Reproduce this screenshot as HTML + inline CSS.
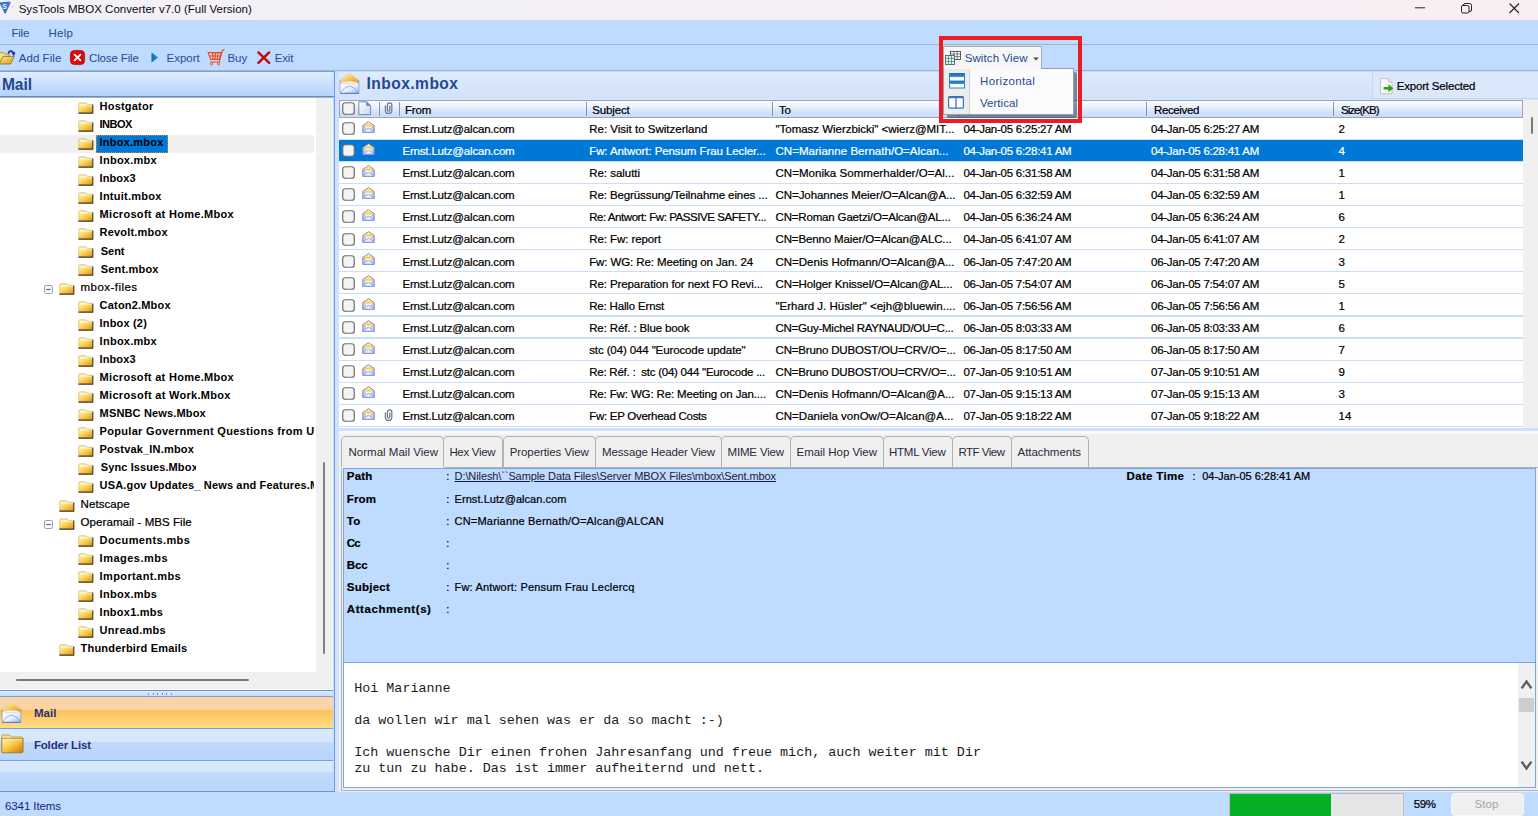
<!DOCTYPE html>
<html><head><meta charset="utf-8"><title>SysTools MBOX Converter</title>
<style>
html,body{margin:0;padding:0;}
body{width:1538px;height:816px;overflow:hidden;position:relative;background:#bfdbff;font-family:"Liberation Sans",sans-serif;}
.b{position:absolute;box-sizing:border-box;}
.t{position:absolute;white-space:pre;}
.k{-webkit-text-stroke:0.22px currentColor;}
svg{position:absolute;overflow:visible;}
</style></head><body>
<div class="b" style="left:0px;top:0px;width:1538px;height:20px;background:linear-gradient(90deg,#f3f1f8 0%,#f5eff6 60%,#f9eef4 100%);"></div>
<svg style="left:0;top:1px" width="14" height="14" viewBox="0 0 14 14"><defs><linearGradient id="gApp" x1="0" y1="0" x2="1" y2="1"><stop offset="0" stop-color="#2a5fb8"/><stop offset=".5" stop-color="#3b7fe0"/><stop offset="1" stop-color="#1c4a9c"/></linearGradient></defs><path d="M-0.5 1.6 L9.8 0.4 L10.6 2 L5.6 12.6 L4.6 12.6 Z" fill="url(#gApp)"/><text x="2.2" y="7.6" font-size="7" font-weight="bold" fill="#e8eef8" font-family="Liberation Sans">S</text><circle cx="12.9" cy="5.6" r=".6" fill="#9aa"/><circle cx="11.2" cy="7.4" r=".4" fill="#aab"/></svg>
<span class="t " style="left:18.70px;top:1px;font-size:11.5px;line-height:16px;color:#0a0a0a;letter-spacing:0.011px;">SysTools MBOX Converter v7.0 (Full Version)</span>
<svg style="left:1410px;top:0" width="128" height="20" viewBox="0 0 128 20"><path d="M5 7.8H15" stroke="#222" stroke-width="1"/><rect x="51.5" y="5.5" width="7.5" height="7.5" rx="1.5" fill="none" stroke="#222" stroke-width="1"/><path d="M53.5 5.5V5Q53.5 3.5 55 3.5H59.5Q61.5 3.5 61.5 5.5V10Q61.5 11.5 60 11.5H59" fill="none" stroke="#222" stroke-width="1"/><path d="M99.5 3.5L109 13M109 3.5L99.5 13" stroke="#222" stroke-width="1.1"/></svg>
<div class="b" style="left:0px;top:20px;width:1538px;height:24px;background:#bfdbff;"></div>
<div class="b" style="left:0px;top:44px;width:1538px;height:1.5px;background:#a3b4cc;"></div>
<span class="t " style="left:11.40px;top:25px;font-size:11.5px;line-height:16px;color:#1f4a98;letter-spacing:-0.208px;">File</span>
<span class="t " style="left:48.50px;top:25px;font-size:11.5px;line-height:16px;color:#1f4a98;letter-spacing:0.262px;">Help</span>
<div class="b" style="left:0px;top:45px;width:1538px;height:25px;background:#bfdbff;"></div>
<div class="b" style="left:0px;top:70.1px;width:1538px;height:1.4px;background:#a3b4cc;"></div>
<div class="b" style="left:339px;top:71.5px;width:1199px;height:0.7px;background:#d5e4fa;"></div>
<div class="b" style="left:0px;top:71.3px;width:335px;height:1.1px;background:#7f9fd2;"></div>
<svg style="left:-2px;top:49px" width="18" height="16" viewBox="0 0 18 16"><defs><linearGradient id="gF1" x1="0" y1="0" x2="1" y2="1"><stop offset="0" stop-color="#fbe88e"/><stop offset="1" stop-color="#dc9c1c"/></linearGradient></defs><path d="M.4 14.6V3.6h5l1.4 1.6H11V7.6" fill="#f6e37c" stroke="#a8882c" stroke-width=".8"/><path d="M1.2 15L5 7.4h11.2L12.6 15Z" fill="url(#gF1)" stroke="#8a6a18" stroke-width=".8"/><path d="M10.4 4.8C10.6 1.6 14.4 .8 15.6 4.2" fill="none" stroke="#1c2c94" stroke-width="1.5"/><path d="M13.2 3.6L17.4 3.2 16 7.2Z" fill="#1c2c94"/></svg>
<span class="t " style="left:18.70px;top:50px;font-size:11.5px;line-height:16px;color:#1f4a98;letter-spacing:0.064px;">Add File</span>
<svg style="left:70px;top:50px" width="15" height="15" viewBox="0 0 15 15"><rect x=".4" y=".4" width="14.2" height="14.2" rx="4" fill="#dd0808" stroke="#b80006" stroke-width=".7"/><path d="M4.8 4.8L10.2 10.2M10.2 4.8L4.8 10.2" stroke="#fff" stroke-width="1.9" stroke-linecap="square"/></svg>
<span class="t " style="left:89.00px;top:50px;font-size:11.5px;line-height:16px;color:#1f4a98;letter-spacing:-0.133px;">Close File</span>
<svg style="left:151px;top:52px" width="8" height="11" viewBox="0 0 8 11"><defs><linearGradient id="gEx" x1="0" y1="0" x2="1" y2="0"><stop offset="0" stop-color="#0a6cb0"/><stop offset="1" stop-color="#2098d8"/></linearGradient></defs><path d="M.5 .5L7.2 5.5 .5 10.5Z" fill="url(#gEx)"/></svg>
<span class="t " style="left:166.50px;top:50px;font-size:11.5px;line-height:16px;color:#1f4a98;letter-spacing:0.011px;">Export</span>
<svg style="left:207px;top:48px" width="19" height="18" viewBox="0 0 19 18"><g fill="none" stroke="#f04a1c" stroke-width="1.15"><path d="M1.2 4.6H14.2L12.6 11.4H3.6Z"/><path d="M17.4 1.4L15.4 2.4 12.2 14H3.2"/><path d="M2.4 8H13.4M5.4 4.8L6 11.2M8.2 4.8V11.2M11 4.8L10.4 11.2"/></g><circle cx="4.6" cy="15.8" r="1.2" fill="none" stroke="#f04a1c" stroke-width=".9"/><circle cx="11.6" cy="15.8" r="1.2" fill="none" stroke="#f04a1c" stroke-width=".9"/></svg>
<span class="t " style="left:227.40px;top:50px;font-size:11.5px;line-height:16px;color:#1f4a98;letter-spacing:-0.005px;">Buy</span>
<svg style="left:257px;top:51px" width="14" height="13" viewBox="0 0 14 13"><path d="M1.4 1.4L12.2 11.8M12.2 1.4L1.4 11.8" stroke="#c20808" stroke-width="2.4" stroke-linecap="round"/></svg>
<span class="t " style="left:274.70px;top:50px;font-size:11.5px;line-height:16px;color:#1f4a98;letter-spacing:-0.118px;">Exit</span>
<div class="b" style="left:0px;top:72px;width:333px;height:25px;background:linear-gradient(180deg,#e6f0fe 0%,#dcebfe 6%,#d2e4fd 35%,#c0dafc 65%,#b3d2fb 100%);"></div>
<div class="b" style="left:0px;top:95.6px;width:335px;height:1.5px;background:#5f8dcc;"></div>
<div class="b" style="left:0px;top:97.1px;width:333px;height:0.7px;background:#a8b4c4;"></div>
<span class="t " style="left:1.90px;top:74px;font-size:15.6px;line-height:21px;font-weight:bold;color:#26478f;letter-spacing:-0.010px;">Mail</span>
<div class="b" style="left:0px;top:97.5px;width:316px;height:574.5px;background:#fff;"></div>
<div class="b" style="left:316px;top:97.5px;width:17px;height:591px;background:#f0f0f0;"></div>
<div class="b" style="left:0px;top:672px;width:333px;height:17px;background:#f0f0f0;"></div>
<div class="b" style="left:332.4px;top:98px;width:0.8px;height:592px;background:#eef4fd;"></div>
<div class="b" style="left:333.7px;top:72px;width:1.2px;height:720px;background:#6f9bd6;"></div>
<div class="b" style="left:335px;top:72px;width:4px;height:720px;background:#d0e2fc;"></div>
<div class="b" style="left:16px;top:679.3px;width:233px;height:2px;background:#7a7a7a;border-radius:1px;"></div>
<div class="b" style="left:322.8px;top:462px;width:2px;height:192px;background:#808080;border-radius:1px;"></div>
<svg width="0" height="0" style="left:0;top:0"><defs>
<linearGradient id="gFo" x1="0" y1="0" x2="1" y2="1"><stop offset="0" stop-color="#fff4b4"/><stop offset=".4" stop-color="#fbd660"/><stop offset="1" stop-color="#dd9410"/></linearGradient>
<g id="fold"><path d="M1 3.4V1.7Q1 .9 1.8 .9H7.4Q8.2 .9 8.6 1.5L9.2 2.4H13.4Q14.3 2.4 14.3 3.3V4.4H1Z" fill="#fff7c4" stroke="#c4a24c" stroke-width=".7"/><path d="M.7 2.9H14.4V10.8H.7Z" fill="url(#gFo)"/><path d="M.7 2.9V10.8" stroke="#dcb652" stroke-width=".6"/><path d="M.9 3.2H14.2" stroke="#fffbe0" stroke-width=".7"/><path d="M.4 11.1H15M14.8 2.6V11.6" stroke="#3e2e0c" stroke-width="1.1"/></g>
<g id="exp"><rect x=".5" y=".5" width="8" height="8" rx="1.4" fill="#fafafa" stroke="#a2a2a2"/><path d="M2.3 4.5H6.7" stroke="#4a66c0" stroke-width="1.2"/></g>
</defs></svg>
<div class="b" style="left:0;top:98px;width:314.4px;height:574px;overflow:hidden;">
<span class="t " style="left:99.60px;top:0px;font-size:11px;line-height:16px;font-weight:bold;color:#000;letter-spacing:0.206px;">Hostgator</span>
<svg style="left:78px;top:3.7999999999999945px" width="16" height="13" viewBox="0 0 16 13"><use href="#fold"/></svg>
<span class="t " style="left:99.60px;top:18px;font-size:11px;line-height:16px;font-weight:bold;color:#000;letter-spacing:-0.547px;">INBOX</span>
<svg style="left:78px;top:21.86499999999999px" width="16" height="13" viewBox="0 0 16 13"><use href="#fold"/></svg>
<div class="b" style="left:0px;top:37.12999999999999px;width:316px;height:18px;background:#f0f0f0;"></div>
<div class="b" style="left:96.2px;top:36.82999999999999px;width:71.7px;height:18.3px;background:#0078d7;border:1px dotted #d8862a;"></div>
<span class="t " style="left:99.60px;top:36px;font-size:11px;line-height:16px;font-weight:bold;color:#000;letter-spacing:0.218px;">Inbox.mbox</span>
<svg style="left:78px;top:39.92999999999999px" width="16" height="13" viewBox="0 0 16 13"><use href="#fold"/></svg>
<span class="t " style="left:99.60px;top:54px;font-size:11px;line-height:16px;font-weight:bold;color:#000;letter-spacing:0.266px;">Inbox.mbx</span>
<svg style="left:78px;top:57.99500000000002px" width="16" height="13" viewBox="0 0 16 13"><use href="#fold"/></svg>
<span class="t " style="left:99.60px;top:72px;font-size:11px;line-height:16px;font-weight:bold;color:#000;letter-spacing:0.092px;">Inbox3</span>
<svg style="left:78px;top:76.06000000000002px" width="16" height="13" viewBox="0 0 16 13"><use href="#fold"/></svg>
<span class="t " style="left:99.60px;top:90px;font-size:11px;line-height:16px;font-weight:bold;color:#000;letter-spacing:0.248px;">Intuit.mbox</span>
<svg style="left:78px;top:94.12500000000001px" width="16" height="13" viewBox="0 0 16 13"><use href="#fold"/></svg>
<span class="t " style="left:99.60px;top:108px;font-size:11px;line-height:16px;font-weight:bold;color:#000;letter-spacing:0.303px;">Microsoft at Home.Mbox</span>
<svg style="left:78px;top:112.19000000000001px" width="16" height="13" viewBox="0 0 16 13"><use href="#fold"/></svg>
<span class="t " style="left:99.60px;top:126px;font-size:11px;line-height:16px;font-weight:bold;color:#000;letter-spacing:0.190px;">Revolt.mbox</span>
<svg style="left:78px;top:130.255px" width="16" height="13" viewBox="0 0 16 13"><use href="#fold"/></svg>
<span class="t " style="left:100.80px;top:145px;font-size:11px;line-height:16px;font-weight:bold;color:#000;letter-spacing:-0.034px;">Sent</span>
<svg style="left:78px;top:148.32px" width="16" height="13" viewBox="0 0 16 13"><use href="#fold"/></svg>
<span class="t " style="left:100.80px;top:163px;font-size:11px;line-height:16px;font-weight:bold;color:#000;letter-spacing:0.174px;">Sent.mbox</span>
<svg style="left:78px;top:166.385px" width="16" height="13" viewBox="0 0 16 13"><use href="#fold"/></svg>
<span class="t  k" style="left:80.60px;top:181px;font-size:11.5px;line-height:16px;color:#000;letter-spacing:0.450px;">mbox-files</span>
<svg style="left:59px;top:184.95px" width="16" height="13" viewBox="0 0 16 13"><use href="#fold"/></svg>
<svg style="left:44px;top:187.25px" width="9" height="9" viewBox="0 0 9 9"><use href="#exp"/></svg>
<span class="t " style="left:99.60px;top:199px;font-size:11px;line-height:16px;font-weight:bold;color:#000;letter-spacing:0.186px;">Caton2.Mbox</span>
<svg style="left:78px;top:202.515px" width="16" height="13" viewBox="0 0 16 13"><use href="#fold"/></svg>
<span class="t " style="left:99.60px;top:217px;font-size:11px;line-height:16px;font-weight:bold;color:#000;letter-spacing:0.174px;">Inbox (2)</span>
<svg style="left:78px;top:220.57999999999998px" width="16" height="13" viewBox="0 0 16 13"><use href="#fold"/></svg>
<span class="t " style="left:99.60px;top:235px;font-size:11px;line-height:16px;font-weight:bold;color:#000;letter-spacing:0.266px;">Inbox.mbx</span>
<svg style="left:78px;top:238.64500000000004px" width="16" height="13" viewBox="0 0 16 13"><use href="#fold"/></svg>
<span class="t " style="left:99.60px;top:253px;font-size:11px;line-height:16px;font-weight:bold;color:#000;letter-spacing:0.092px;">Inbox3</span>
<svg style="left:78px;top:256.71px" width="16" height="13" viewBox="0 0 16 13"><use href="#fold"/></svg>
<span class="t " style="left:99.60px;top:271px;font-size:11px;line-height:16px;font-weight:bold;color:#000;letter-spacing:0.303px;">Microsoft at Home.Mbox</span>
<svg style="left:78px;top:274.77500000000003px" width="16" height="13" viewBox="0 0 16 13"><use href="#fold"/></svg>
<span class="t " style="left:99.60px;top:289px;font-size:11px;line-height:16px;font-weight:bold;color:#000;letter-spacing:0.306px;">Microsoft at Work.Mbox</span>
<svg style="left:78px;top:292.84px" width="16" height="13" viewBox="0 0 16 13"><use href="#fold"/></svg>
<span class="t " style="left:99.60px;top:307px;font-size:11px;line-height:16px;font-weight:bold;color:#000;letter-spacing:0.153px;">MSNBC News.Mbox</span>
<svg style="left:78px;top:310.90500000000003px" width="16" height="13" viewBox="0 0 16 13"><use href="#fold"/></svg>
<span class="t " style="left:99.60px;top:325px;font-size:11px;line-height:16px;font-weight:bold;color:#000;letter-spacing:0.307px;">Popular Government Questions from U</span>
<svg style="left:78px;top:328.96999999999997px" width="16" height="13" viewBox="0 0 16 13"><use href="#fold"/></svg>
<span class="t " style="left:99.60px;top:343px;font-size:11px;line-height:16px;font-weight:bold;color:#000;letter-spacing:0.180px;">Postvak_IN.mbox</span>
<svg style="left:78px;top:347.035px" width="16" height="13" viewBox="0 0 16 13"><use href="#fold"/></svg>
<span class="t " style="left:100.80px;top:361px;font-size:11px;line-height:16px;font-weight:bold;color:#000;letter-spacing:0.097px;">Sync Issues.Mbo</span>
<span class="t " style="left:191.70px;top:361px;font-size:11px;line-height:16px;font-weight:bold;color:#000;width:4.6px;overflow:hidden;">x</span>
<svg style="left:78px;top:365.09999999999997px" width="16" height="13" viewBox="0 0 16 13"><use href="#fold"/></svg>
<span class="t " style="left:99.60px;top:379px;font-size:11px;line-height:16px;font-weight:bold;color:#000;letter-spacing:0.160px;">USA.gov Updates_ News and Features.M</span>
<svg style="left:78px;top:383.165px" width="16" height="13" viewBox="0 0 16 13"><use href="#fold"/></svg>
<span class="t  k" style="left:80.60px;top:398px;font-size:11.5px;line-height:16px;color:#000;letter-spacing:0.065px;">Netscape</span>
<svg style="left:59px;top:401.72999999999996px" width="16" height="13" viewBox="0 0 16 13"><use href="#fold"/></svg>
<span class="t  k" style="left:80.60px;top:416px;font-size:11.5px;line-height:16px;color:#000;letter-spacing:0.064px;">Operamail - MBS File</span>
<svg style="left:59px;top:419.795px" width="16" height="13" viewBox="0 0 16 13"><use href="#fold"/></svg>
<svg style="left:44px;top:422.095px" width="9" height="9" viewBox="0 0 9 9"><use href="#exp"/></svg>
<span class="t " style="left:99.60px;top:434px;font-size:11px;line-height:16px;font-weight:bold;color:#000;letter-spacing:0.387px;">Documents.mbs</span>
<svg style="left:78px;top:437.36000000000007px" width="16" height="13" viewBox="0 0 16 13"><use href="#fold"/></svg>
<span class="t " style="left:99.60px;top:452px;font-size:11px;line-height:16px;font-weight:bold;color:#000;letter-spacing:0.482px;">Images.mbs</span>
<svg style="left:78px;top:455.425px" width="16" height="13" viewBox="0 0 16 13"><use href="#fold"/></svg>
<span class="t " style="left:99.60px;top:470px;font-size:11px;line-height:16px;font-weight:bold;color:#000;letter-spacing:0.385px;">Important.mbs</span>
<svg style="left:78px;top:473.49000000000007px" width="16" height="13" viewBox="0 0 16 13"><use href="#fold"/></svg>
<span class="t " style="left:99.60px;top:488px;font-size:11px;line-height:16px;font-weight:bold;color:#000;letter-spacing:0.299px;">Inbox.mbs</span>
<svg style="left:78px;top:491.555px" width="16" height="13" viewBox="0 0 16 13"><use href="#fold"/></svg>
<span class="t " style="left:99.60px;top:506px;font-size:11px;line-height:16px;font-weight:bold;color:#000;letter-spacing:0.248px;">Inbox1.mbs</span>
<svg style="left:78px;top:509.62000000000006px" width="16" height="13" viewBox="0 0 16 13"><use href="#fold"/></svg>
<span class="t " style="left:99.60px;top:524px;font-size:11px;line-height:16px;font-weight:bold;color:#000;letter-spacing:0.283px;">Unread.mbs</span>
<svg style="left:78px;top:527.6850000000001px" width="16" height="13" viewBox="0 0 16 13"><use href="#fold"/></svg>
<span class="t " style="left:80.60px;top:542px;font-size:11px;line-height:16px;font-weight:bold;color:#000;letter-spacing:0.189px;">Thunderbird Emails</span>
<svg style="left:59px;top:545.7500000000001px" width="16" height="13" viewBox="0 0 16 13"><use href="#fold"/></svg>
</div>
<div class="b" style="left:0px;top:689px;width:333px;height:1px;background:#fff;"></div>
<div class="b" style="left:0px;top:690px;width:333px;height:1px;background:#6593cf;"></div>
<div class="b" style="left:0px;top:691px;width:333px;height:5px;background:linear-gradient(180deg,#dce9fb,#c6dbf9);"></div>
<div class="b" style="left:148.0px;top:692.6px;width:2px;height:2px;background:#5a7fbf;border-radius:1px;"></div>
<div class="b" style="left:149.0px;top:693.4px;width:1.6px;height:1.6px;background:#f4f8ff;border-radius:1px;"></div>
<div class="b" style="left:152.6px;top:692.6px;width:2px;height:2px;background:#5a7fbf;border-radius:1px;"></div>
<div class="b" style="left:153.6px;top:693.4px;width:1.6px;height:1.6px;background:#f4f8ff;border-radius:1px;"></div>
<div class="b" style="left:157.2px;top:692.6px;width:2px;height:2px;background:#5a7fbf;border-radius:1px;"></div>
<div class="b" style="left:158.2px;top:693.4px;width:1.6px;height:1.6px;background:#f4f8ff;border-radius:1px;"></div>
<div class="b" style="left:161.8px;top:692.6px;width:2px;height:2px;background:#5a7fbf;border-radius:1px;"></div>
<div class="b" style="left:162.8px;top:693.4px;width:1.6px;height:1.6px;background:#f4f8ff;border-radius:1px;"></div>
<div class="b" style="left:166.4px;top:692.6px;width:2px;height:2px;background:#5a7fbf;border-radius:1px;"></div>
<div class="b" style="left:167.4px;top:693.4px;width:1.6px;height:1.6px;background:#f4f8ff;border-radius:1px;"></div>
<div class="b" style="left:171.0px;top:692.6px;width:2px;height:2px;background:#5a7fbf;border-radius:1px;"></div>
<div class="b" style="left:172.0px;top:693.4px;width:1.6px;height:1.6px;background:#f4f8ff;border-radius:1px;"></div>
<div class="b" style="left:0px;top:696px;width:333px;height:1.2px;background:#76a0d8;"></div>
<div class="b" style="left:0px;top:697px;width:333px;height:32px;background:linear-gradient(180deg,#fbd6ab 0%,#fbd2a2 40%,#fdc25c 42%,#fdca6c 60%,#fedf85 100%);"></div>
<div class="b" style="left:0px;top:728px;width:333px;height:1.2px;background:#76a0d8;"></div>
<div class="b" style="left:0px;top:729px;width:333px;height:32px;background:linear-gradient(180deg,#dbe9fc 0%,#d6e6fc 40%,#c1dafc 42%,#b9d5fb 100%);"></div>
<div class="b" style="left:0px;top:760px;width:333px;height:1.2px;background:#76a0d8;"></div>
<div class="b" style="left:0px;top:761px;width:333px;height:30px;background:linear-gradient(180deg,#dbe9fc 0%,#d6e6fc 37%,#c1dafc 39%,#b9d5fb 100%);"></div>
<div class="b" style="left:0px;top:791px;width:335px;height:1px;background:#6593cf;"></div>
<span class="t " style="left:33.90px;top:705px;font-size:11.5px;line-height:16px;font-weight:bold;color:#2c307c;letter-spacing:0.084px;">Mail</span>
<span class="t " style="left:33.90px;top:737px;font-size:11.5px;line-height:16px;font-weight:bold;color:#2c307c;letter-spacing:-0.162px;">Folder List</span>
<svg style="left:1.2px;top:701px" width="22" height="24" viewBox="0 0 22 24"><use href="#benv"/></svg>
<svg style="left:1px;top:734px" width="23" height="20" viewBox="0 0 23 20"><defs><linearGradient id="gBF" x1="0" y1="0" x2="1" y2="1"><stop offset="0" stop-color="#fff6b8"/><stop offset=".5" stop-color="#f9c440"/><stop offset="1" stop-color="#c47808"/></linearGradient></defs>
<path d="M.8 2.4Q.8 1 2.2 1H8Q9 1 9.6 2L10.2 3H20.6Q22 3 22 4.4V6H.8Z" fill="#f3dc90" stroke="#b89030" stroke-width=".8"/>
<path d="M.8 4.6H22V17.6Q22 18.8 20.8 18.8H2Q.8 18.8 .8 17.6Z" fill="url(#gBF)" stroke="#9c7418" stroke-width=".9"/><path d="M1.4 5.2H21.4" stroke="#fff6cc" stroke-width=".8"/></svg>
<span class="t " style="left:5.00px;top:798px;font-size:11.5px;line-height:16px;color:#1a1a8a;letter-spacing:-0.089px;">6341 Items</span>
<div class="b" style="left:1229px;top:793.3px;width:175px;height:24px;background:#e6e6e6;border:1px solid #bcbcbc;"></div>
<div class="b" style="left:1230px;top:794.3px;width:101px;height:23px;background:#06b025;"></div>
<span class="t  k" style="left:1413.80px;top:796px;font-size:11.5px;line-height:16px;color:#000;letter-spacing:-0.439px;">59%</span>
<div class="b" style="left:1451px;top:793.3px;width:72.8px;height:23px;background:#efefef;border:1px solid #f8f8f8;border-radius:4px;"></div>
<span class="t " style="left:1474.60px;top:796px;font-size:11.5px;line-height:16px;color:#a3a3a3;letter-spacing:0.036px;">Stop</span>
<div class="b" style="left:339px;top:72px;width:1199px;height:27px;background:linear-gradient(180deg,#dfebfd 0%,#d7e6fc 50%,#d2e3fb 100%);"></div>
<div class="b" style="left:339px;top:99px;width:1199px;height:1px;background:#d7e6fc;"></div>
<svg width="0" height="0" style="left:0;top:0"><defs><linearGradient id="gH1" x1="0" y1="0" x2="1" y2="1"><stop offset="0" stop-color="#ffffff"/><stop offset=".55" stop-color="#e6f0fe"/><stop offset="1" stop-color="#86c0fc"/></linearGradient><linearGradient id="gH2" x1="0" y1="0" x2="1" y2="1"><stop offset="0" stop-color="#fff6c8"/><stop offset=".5" stop-color="#f9c650"/><stop offset="1" stop-color="#ee9a14"/></linearGradient>
<g id="benv"><path d="M1.2 8L10.7 1.4 19.8 8V21.3H1.2Z" fill="#eef3fd"/><path d="M1.2 8L10.7 1.4 19.8 8" fill="none" stroke="#c4b8a4" stroke-width=".6"/><path d="M1.2 8V21.3H19.8V8" fill="none" stroke="#7f8cca" stroke-width=".9"/><path d="M1.9 8.1L10.7 2 19.3 8.1V11.4L14 11.8H7L1.9 11.4Z" fill="url(#gH2)"/><path d="M3 10.4Q10.5 8.8 18.2 10.4V14.5H3Z" fill="#f3f5fc"/><path d="M4 12.2Q10.5 10.6 17 12.2" fill="none" stroke="#c6cde6" stroke-width=".7"/><path d="M1.6 20.9V11.6Q4 12.4 7.4 15Q10.5 12.6 13.8 15Q17 12.4 19.4 11.6V20.9Z" fill="url(#gH1)"/><path d="M1.7 20.7Q5.5 14.4 10.5 14Q15.5 14.4 19.3 20.7" fill="none" stroke="#8c9ad8" stroke-width=".8"/><path d="M1.2 21.3H19.8" stroke="#6472be" stroke-width="1"/></g></defs></svg>
<svg style="left:339px;top:72px" width="22" height="24" viewBox="0 0 22 24"><use href="#benv"/></svg>
<span class="t " style="left:366.50px;top:73px;font-size:15.6px;line-height:21px;font-weight:bold;color:#26478f;letter-spacing:0.446px;">Inbox.mbox</span>
<div class="b" style="left:1372px;top:72px;width:166px;height:27px;background:#dbe8fc;border-left:1px solid #c4d6f2;border-bottom:1px solid #c4d6f2;"></div>
<svg style="left:1380px;top:78px" width="14" height="17" viewBox="0 0 14 17"><path d="M.6 .6H8.4L12 4.2V15.8H.6Z" fill="#fafafa" stroke="#b8b8b8" stroke-width=".8"/><path d="M8.4 .6V4.2H12" fill="#e8e8e8" stroke="#b8b8b8" stroke-width=".7"/><path d="M3.6 9H8.4V6.2L13.4 10.2 8.4 14.2V11.4H3.6Z" fill="#2fa010"/></svg>
<span class="t  k" style="left:1396.70px;top:78px;font-size:11.5px;line-height:16px;color:#000;letter-spacing:-0.179px;">Export Selected</span>
<div class="b" style="left:339px;top:100px;width:1184px;height:328px;background:#fff;"></div>
<div class="b" style="left:1523px;top:100px;width:15px;height:331px;background:#f0f0f0;"></div>
<div class="b" style="left:1530.7px;top:117px;width:2px;height:16.5px;background:#7a7a7a;border-radius:1px;"></div>
<div class="b" style="left:339px;top:100px;width:1184px;height:18px;background:linear-gradient(180deg,#fbfdff 0%,#e9f2fd 35%,#d3e3fb 70%,#c8dcf9 100%);border:1px solid #9aa6b8;border-left-color:#9aa6b8;"></div>
<div class="b" style="left:378.5px;top:102px;width:1px;height:14px;background:#8a94a6;"></div>
<div class="b" style="left:398.5px;top:102px;width:1px;height:14px;background:#8a94a6;"></div>
<div class="b" style="left:585.5px;top:102px;width:1px;height:14px;background:#8a94a6;"></div>
<div class="b" style="left:771.5px;top:102px;width:1px;height:14px;background:#8a94a6;"></div>
<div class="b" style="left:958.5px;top:102px;width:1px;height:14px;background:#8a94a6;"></div>
<div class="b" style="left:1145.5px;top:102px;width:1px;height:14px;background:#8a94a6;"></div>
<div class="b" style="left:1332.5px;top:102px;width:1px;height:14px;background:#8a94a6;"></div>
<span class="t  k" style="left:405.00px;top:102px;font-size:11.5px;line-height:16px;color:#000;letter-spacing:-0.207px;">From</span>
<span class="t  k" style="left:592.20px;top:102px;font-size:11.5px;line-height:16px;color:#000;letter-spacing:-0.123px;">Subject</span>
<span class="t  k" style="left:779.00px;top:102px;font-size:11.5px;line-height:16px;color:#000;letter-spacing:-0.323px;">To</span>
<span class="t  k" style="left:1154.00px;top:102px;font-size:11.5px;line-height:16px;color:#000;letter-spacing:-0.368px;">Received</span>
<span class="t  k" style="left:1341.00px;top:102px;font-size:11.5px;line-height:16px;color:#000;letter-spacing:-0.984px;">Size(KB)</span>
<svg width="0" height="0" style="left:0;top:0"><defs>
<g id="cb"><rect x=".75" y=".75" width="11.5" height="11.5" rx="2.6" fill="#f4f4f4" stroke="#6e6e6e" stroke-width="1.2"/></g>
<linearGradient id="gE1" x1="0" y1="0" x2="0" y2="1"><stop offset="0" stop-color="#f4f8ff"/><stop offset="1" stop-color="#98c0f4"/></linearGradient>
<linearGradient id="gE2" x1="0" y1="0" x2="0" y2="1"><stop offset="0" stop-color="#fff6b0"/><stop offset=".5" stop-color="#ffd658"/><stop offset="1" stop-color="#ffa828"/></linearGradient>
<g id="env"><path d="M.8 4.5L6.5 .7 12.2 4.5V11.5H.8Z" fill="url(#gE1)" stroke="#7c74c4" stroke-width=".9"/><path d="M1.7 4.7L6.5 1.5 11.3 4.7 9.2 6.9H3.8Z" fill="url(#gE2)"/><path d="M3 5.4H10L9.4 8.2H3.6Z" fill="#fffdf4" opacity=".9"/><path d="M1.2 11.2L4.9 7.9Q6.5 6.9 8.1 7.9L11.8 11.2Z" fill="#e4effc" stroke="#8a92dc" stroke-width=".7"/><path d="M1.2 5.2L4.6 8M11.8 5.2L8.4 8" stroke="#9aa0e0" stroke-width=".6"/></g>
<g id="clip"><path d="M1.4 3.6V8.4Q1.4 11.4 4.6 11.4Q7.8 11.4 7.8 8.4V3Q7.8 .8 5.6 .8Q3.4 .8 3.4 3V8Q3.4 9.2 4.6 9.2Q5.8 9.2 5.8 8V3.6" fill="none" stroke="#707a8e" stroke-width="1.25"/></g>
</defs></svg>
<svg style="left:342px;top:102px" width="13" height="13" viewBox="0 0 13 13"><use href="#cb"/></svg>
<svg style="left:358px;top:101px" width="14" height="15" viewBox="0 0 14 15"><defs><linearGradient id="gPg" x1="0" y1="0" x2="1" y2="1"><stop offset="0" stop-color="#fff"/><stop offset="1" stop-color="#c4d8f8"/></linearGradient></defs><path d="M.8 .8H8.6L12.6 4.6V13.6H.8Z" fill="url(#gPg)" stroke="#6a7ea8" stroke-width=".9"/><path d="M8.6 .8V4.6H12.6" fill="#5a86d8" stroke="#6a7ea8" stroke-width=".6"/></svg>
<svg style="left:384px;top:102px" width="9" height="13" viewBox="0 0 9 13"><use href="#clip"/></svg>
<div class="b" style="left:339px;top:138.5px;width:1184px;height:1.3px;background:#cbdef9;"></div>
<svg style="left:342px;top:122.00px" width="13" height="13" viewBox="0 0 13 13"><use href="#cb"/></svg>
<svg style="left:362px;top:120.70px" width="13" height="12" viewBox="0 0 13 12"><use href="#env"/></svg>
<span class="t  k" style="left:402.50px;top:121px;font-size:11.5px;line-height:16px;color:#000;letter-spacing:-0.193px;">Ernst.Lutz@alcan.com</span>
<span class="t  k" style="left:589.20px;top:121px;font-size:11.5px;line-height:16px;color:#000;letter-spacing:0.003px;">Re: Visit to Switzerland</span>
<span class="t  k" style="left:775.50px;top:121px;font-size:11.5px;line-height:16px;color:#000;letter-spacing:-0.027px;">"Tomasz Wierzbicki" &lt;wierz@MIT...</span>
<span class="t  k" style="left:963.40px;top:121px;font-size:11.5px;line-height:16px;color:#000;letter-spacing:-0.258px;">04-Jan-05 6:25:27 AM</span>
<span class="t  k" style="left:1151.00px;top:121px;font-size:11.5px;line-height:16px;color:#000;letter-spacing:-0.258px;">04-Jan-05 6:25:27 AM</span>
<span class="t  k" style="left:1338.50px;top:121px;font-size:11.5px;line-height:16px;color:#000;">2</span>
<div class="b" style="left:339px;top:139.7px;width:1184px;height:21px;background:#0078d7;"></div>
<div class="b" style="left:339px;top:160.6px;width:1184px;height:1.3px;background:#cbdef9;"></div>
<svg style="left:342px;top:144.10px" width="13" height="13" viewBox="0 0 13 13"><use href="#cb"/></svg>
<svg style="left:362px;top:142.80px" width="13" height="12" viewBox="0 0 13 12"><use href="#env"/></svg>
<span class="t  k" style="left:402.50px;top:143px;font-size:11.5px;line-height:16px;color:#fff;letter-spacing:-0.193px;">Ernst.Lutz@alcan.com</span>
<span class="t  k" style="left:589.20px;top:143px;font-size:11.5px;line-height:16px;color:#fff;letter-spacing:-0.078px;">Fw: Antwort: Pensum Frau Lecler...</span>
<span class="t  k" style="left:775.50px;top:143px;font-size:11.5px;line-height:16px;color:#fff;letter-spacing:0.035px;">CN=Marianne Bernath/O=Alcan...</span>
<span class="t  k" style="left:963.40px;top:143px;font-size:11.5px;line-height:16px;color:#fff;letter-spacing:-0.258px;">04-Jan-05 6:28:41 AM</span>
<span class="t  k" style="left:1151.00px;top:143px;font-size:11.5px;line-height:16px;color:#fff;letter-spacing:-0.258px;">04-Jan-05 6:28:41 AM</span>
<span class="t  k" style="left:1338.50px;top:143px;font-size:11.5px;line-height:16px;color:#fff;">4</span>
<div class="b" style="left:339px;top:182.70000000000002px;width:1184px;height:1.3px;background:#cbdef9;"></div>
<svg style="left:342px;top:166.20px" width="13" height="13" viewBox="0 0 13 13"><use href="#cb"/></svg>
<svg style="left:362px;top:164.90px" width="13" height="12" viewBox="0 0 13 12"><use href="#env"/></svg>
<span class="t  k" style="left:402.50px;top:165px;font-size:11.5px;line-height:16px;color:#000;letter-spacing:-0.193px;">Ernst.Lutz@alcan.com</span>
<span class="t  k" style="left:589.20px;top:165px;font-size:11.5px;line-height:16px;color:#000;letter-spacing:-0.030px;">Re: salutti</span>
<span class="t  k" style="left:775.50px;top:165px;font-size:11.5px;line-height:16px;color:#000;letter-spacing:0.044px;">CN=Monika Sommerhalder/O=Al...</span>
<span class="t  k" style="left:963.40px;top:165px;font-size:11.5px;line-height:16px;color:#000;letter-spacing:-0.258px;">04-Jan-05 6:31:58 AM</span>
<span class="t  k" style="left:1151.00px;top:165px;font-size:11.5px;line-height:16px;color:#000;letter-spacing:-0.258px;">04-Jan-05 6:31:58 AM</span>
<span class="t  k" style="left:1338.50px;top:165px;font-size:11.5px;line-height:16px;color:#000;">1</span>
<div class="b" style="left:339px;top:204.8px;width:1184px;height:1.3px;background:#cbdef9;"></div>
<svg style="left:342px;top:188.30px" width="13" height="13" viewBox="0 0 13 13"><use href="#cb"/></svg>
<svg style="left:362px;top:187.00px" width="13" height="12" viewBox="0 0 13 12"><use href="#env"/></svg>
<span class="t  k" style="left:402.50px;top:187px;font-size:11.5px;line-height:16px;color:#000;letter-spacing:-0.193px;">Ernst.Lutz@alcan.com</span>
<span class="t  k" style="left:589.20px;top:187px;font-size:11.5px;line-height:16px;color:#000;letter-spacing:-0.095px;">Re: Begrüssung/Teilnahme eines ...</span>
<span class="t  k" style="left:775.50px;top:187px;font-size:11.5px;line-height:16px;color:#000;letter-spacing:-0.057px;">CN=Johannes Meier/O=Alcan@A...</span>
<span class="t  k" style="left:963.40px;top:187px;font-size:11.5px;line-height:16px;color:#000;letter-spacing:-0.258px;">04-Jan-05 6:32:59 AM</span>
<span class="t  k" style="left:1151.00px;top:187px;font-size:11.5px;line-height:16px;color:#000;letter-spacing:-0.258px;">04-Jan-05 6:32:59 AM</span>
<span class="t  k" style="left:1338.50px;top:187px;font-size:11.5px;line-height:16px;color:#000;">1</span>
<div class="b" style="left:339px;top:226.9px;width:1184px;height:1.3px;background:#cbdef9;"></div>
<svg style="left:342px;top:210.40px" width="13" height="13" viewBox="0 0 13 13"><use href="#cb"/></svg>
<svg style="left:362px;top:209.10px" width="13" height="12" viewBox="0 0 13 12"><use href="#env"/></svg>
<span class="t  k" style="left:402.50px;top:209px;font-size:11.5px;line-height:16px;color:#000;letter-spacing:-0.193px;">Ernst.Lutz@alcan.com</span>
<span class="t  k" style="left:589.20px;top:209px;font-size:11.5px;line-height:16px;color:#000;letter-spacing:-0.445px;">Re: Antwort: Fw: PASSIVE SAFETY...</span>
<span class="t  k" style="left:775.50px;top:209px;font-size:11.5px;line-height:16px;color:#000;letter-spacing:-0.165px;">CN=Roman Gaetzi/O=Alcan@AL...</span>
<span class="t  k" style="left:963.40px;top:209px;font-size:11.5px;line-height:16px;color:#000;letter-spacing:-0.258px;">04-Jan-05 6:36:24 AM</span>
<span class="t  k" style="left:1151.00px;top:209px;font-size:11.5px;line-height:16px;color:#000;letter-spacing:-0.258px;">04-Jan-05 6:36:24 AM</span>
<span class="t  k" style="left:1338.50px;top:209px;font-size:11.5px;line-height:16px;color:#000;">6</span>
<div class="b" style="left:339px;top:249.0px;width:1184px;height:1.3px;background:#cbdef9;"></div>
<svg style="left:342px;top:232.50px" width="13" height="13" viewBox="0 0 13 13"><use href="#cb"/></svg>
<svg style="left:362px;top:231.20px" width="13" height="12" viewBox="0 0 13 12"><use href="#env"/></svg>
<span class="t  k" style="left:402.50px;top:231px;font-size:11.5px;line-height:16px;color:#000;letter-spacing:-0.193px;">Ernst.Lutz@alcan.com</span>
<span class="t  k" style="left:589.20px;top:231px;font-size:11.5px;line-height:16px;color:#000;letter-spacing:-0.075px;">Re: Fw: report</span>
<span class="t  k" style="left:775.50px;top:231px;font-size:11.5px;line-height:16px;color:#000;letter-spacing:-0.130px;">CN=Benno Maier/O=Alcan@ALC...</span>
<span class="t  k" style="left:963.40px;top:231px;font-size:11.5px;line-height:16px;color:#000;letter-spacing:-0.258px;">04-Jan-05 6:41:07 AM</span>
<span class="t  k" style="left:1151.00px;top:231px;font-size:11.5px;line-height:16px;color:#000;letter-spacing:-0.258px;">04-Jan-05 6:41:07 AM</span>
<span class="t  k" style="left:1338.50px;top:231px;font-size:11.5px;line-height:16px;color:#000;">2</span>
<div class="b" style="left:339px;top:271.1px;width:1184px;height:1.3px;background:#cbdef9;"></div>
<svg style="left:342px;top:254.60px" width="13" height="13" viewBox="0 0 13 13"><use href="#cb"/></svg>
<svg style="left:362px;top:253.30px" width="13" height="12" viewBox="0 0 13 12"><use href="#env"/></svg>
<span class="t  k" style="left:402.50px;top:254px;font-size:11.5px;line-height:16px;color:#000;letter-spacing:-0.193px;">Ernst.Lutz@alcan.com</span>
<span class="t  k" style="left:589.20px;top:254px;font-size:11.5px;line-height:16px;color:#000;letter-spacing:-0.101px;">Fw: WG: Re: Meeting on Jan. 24</span>
<span class="t  k" style="left:775.50px;top:254px;font-size:11.5px;line-height:16px;color:#000;letter-spacing:-0.005px;">CN=Denis Hofmann/O=Alcan@A...</span>
<span class="t  k" style="left:963.40px;top:254px;font-size:11.5px;line-height:16px;color:#000;letter-spacing:-0.258px;">06-Jan-05 7:47:20 AM</span>
<span class="t  k" style="left:1151.00px;top:254px;font-size:11.5px;line-height:16px;color:#000;letter-spacing:-0.258px;">06-Jan-05 7:47:20 AM</span>
<span class="t  k" style="left:1338.50px;top:254px;font-size:11.5px;line-height:16px;color:#000;">3</span>
<div class="b" style="left:339px;top:293.2px;width:1184px;height:1.3px;background:#cbdef9;"></div>
<svg style="left:342px;top:276.70px" width="13" height="13" viewBox="0 0 13 13"><use href="#cb"/></svg>
<svg style="left:362px;top:275.40px" width="13" height="12" viewBox="0 0 13 12"><use href="#env"/></svg>
<span class="t  k" style="left:402.50px;top:276px;font-size:11.5px;line-height:16px;color:#000;letter-spacing:-0.193px;">Ernst.Lutz@alcan.com</span>
<span class="t  k" style="left:589.20px;top:276px;font-size:11.5px;line-height:16px;color:#000;letter-spacing:-0.093px;">Re: Preparation for next FO Revi...</span>
<span class="t  k" style="left:775.50px;top:276px;font-size:11.5px;line-height:16px;color:#000;letter-spacing:-0.110px;">CN=Holger Knissel/O=Alcan@AL...</span>
<span class="t  k" style="left:963.40px;top:276px;font-size:11.5px;line-height:16px;color:#000;letter-spacing:-0.258px;">06-Jan-05 7:54:07 AM</span>
<span class="t  k" style="left:1151.00px;top:276px;font-size:11.5px;line-height:16px;color:#000;letter-spacing:-0.258px;">06-Jan-05 7:54:07 AM</span>
<span class="t  k" style="left:1338.50px;top:276px;font-size:11.5px;line-height:16px;color:#000;">5</span>
<div class="b" style="left:339px;top:315.29999999999995px;width:1184px;height:1.3px;background:#cbdef9;"></div>
<svg style="left:342px;top:298.80px" width="13" height="13" viewBox="0 0 13 13"><use href="#cb"/></svg>
<svg style="left:362px;top:297.50px" width="13" height="12" viewBox="0 0 13 12"><use href="#env"/></svg>
<span class="t  k" style="left:402.50px;top:298px;font-size:11.5px;line-height:16px;color:#000;letter-spacing:-0.193px;">Ernst.Lutz@alcan.com</span>
<span class="t  k" style="left:589.20px;top:298px;font-size:11.5px;line-height:16px;color:#000;letter-spacing:-0.169px;">Re: Hallo Ernst</span>
<span class="t  k" style="left:775.50px;top:298px;font-size:11.5px;line-height:16px;color:#000;letter-spacing:0.001px;">"Erhard J. Hüsler" &lt;ejh@bluewin....</span>
<span class="t  k" style="left:963.40px;top:298px;font-size:11.5px;line-height:16px;color:#000;letter-spacing:-0.258px;">06-Jan-05 7:56:56 AM</span>
<span class="t  k" style="left:1151.00px;top:298px;font-size:11.5px;line-height:16px;color:#000;letter-spacing:-0.258px;">06-Jan-05 7:56:56 AM</span>
<span class="t  k" style="left:1338.50px;top:298px;font-size:11.5px;line-height:16px;color:#000;">1</span>
<div class="b" style="left:339px;top:337.4px;width:1184px;height:1.3px;background:#cbdef9;"></div>
<svg style="left:342px;top:320.90px" width="13" height="13" viewBox="0 0 13 13"><use href="#cb"/></svg>
<svg style="left:362px;top:319.60px" width="13" height="12" viewBox="0 0 13 12"><use href="#env"/></svg>
<span class="t  k" style="left:402.50px;top:320px;font-size:11.5px;line-height:16px;color:#000;letter-spacing:-0.193px;">Ernst.Lutz@alcan.com</span>
<span class="t  k" style="left:589.20px;top:320px;font-size:11.5px;line-height:16px;color:#000;letter-spacing:-0.131px;">Re: Réf. : Blue book</span>
<span class="t  k" style="left:775.50px;top:320px;font-size:11.5px;line-height:16px;color:#000;letter-spacing:-0.245px;">CN=Guy-Michel RAYNAUD/OU=C...</span>
<span class="t  k" style="left:963.40px;top:320px;font-size:11.5px;line-height:16px;color:#000;letter-spacing:-0.258px;">06-Jan-05 8:03:33 AM</span>
<span class="t  k" style="left:1151.00px;top:320px;font-size:11.5px;line-height:16px;color:#000;letter-spacing:-0.258px;">06-Jan-05 8:03:33 AM</span>
<span class="t  k" style="left:1338.50px;top:320px;font-size:11.5px;line-height:16px;color:#000;">6</span>
<div class="b" style="left:339px;top:359.5px;width:1184px;height:1.3px;background:#cbdef9;"></div>
<svg style="left:342px;top:343.00px" width="13" height="13" viewBox="0 0 13 13"><use href="#cb"/></svg>
<svg style="left:362px;top:341.70px" width="13" height="12" viewBox="0 0 13 12"><use href="#env"/></svg>
<span class="t  k" style="left:402.50px;top:342px;font-size:11.5px;line-height:16px;color:#000;letter-spacing:-0.193px;">Ernst.Lutz@alcan.com</span>
<span class="t  k" style="left:589.20px;top:342px;font-size:11.5px;line-height:16px;color:#000;letter-spacing:-0.113px;">stc (04) 044 "Eurocode update"</span>
<span class="t  k" style="left:775.50px;top:342px;font-size:11.5px;line-height:16px;color:#000;letter-spacing:-0.172px;">CN=Bruno DUBOST/OU=CRV/O=...</span>
<span class="t  k" style="left:963.40px;top:342px;font-size:11.5px;line-height:16px;color:#000;letter-spacing:-0.258px;">06-Jan-05 8:17:50 AM</span>
<span class="t  k" style="left:1151.00px;top:342px;font-size:11.5px;line-height:16px;color:#000;letter-spacing:-0.258px;">06-Jan-05 8:17:50 AM</span>
<span class="t  k" style="left:1338.50px;top:342px;font-size:11.5px;line-height:16px;color:#000;">7</span>
<div class="b" style="left:339px;top:381.6px;width:1184px;height:1.3px;background:#cbdef9;"></div>
<svg style="left:342px;top:365.10px" width="13" height="13" viewBox="0 0 13 13"><use href="#cb"/></svg>
<svg style="left:362px;top:363.80px" width="13" height="12" viewBox="0 0 13 12"><use href="#env"/></svg>
<span class="t  k" style="left:402.50px;top:364px;font-size:11.5px;line-height:16px;color:#000;letter-spacing:-0.193px;">Ernst.Lutz@alcan.com</span>
<span class="t  k" style="left:589.20px;top:364px;font-size:11.5px;line-height:16px;color:#000;letter-spacing:-0.241px;">Re: Réf. :  stc (04) 044 "Eurocode ...</span>
<span class="t  k" style="left:775.50px;top:364px;font-size:11.5px;line-height:16px;color:#000;letter-spacing:-0.172px;">CN=Bruno DUBOST/OU=CRV/O=...</span>
<span class="t  k" style="left:963.40px;top:364px;font-size:11.5px;line-height:16px;color:#000;letter-spacing:-0.258px;">07-Jan-05 9:10:51 AM</span>
<span class="t  k" style="left:1151.00px;top:364px;font-size:11.5px;line-height:16px;color:#000;letter-spacing:-0.258px;">07-Jan-05 9:10:51 AM</span>
<span class="t  k" style="left:1338.50px;top:364px;font-size:11.5px;line-height:16px;color:#000;">9</span>
<div class="b" style="left:339px;top:403.70000000000005px;width:1184px;height:1.3px;background:#cbdef9;"></div>
<svg style="left:342px;top:387.20px" width="13" height="13" viewBox="0 0 13 13"><use href="#cb"/></svg>
<svg style="left:362px;top:385.90px" width="13" height="12" viewBox="0 0 13 12"><use href="#env"/></svg>
<span class="t  k" style="left:402.50px;top:386px;font-size:11.5px;line-height:16px;color:#000;letter-spacing:-0.193px;">Ernst.Lutz@alcan.com</span>
<span class="t  k" style="left:589.20px;top:386px;font-size:11.5px;line-height:16px;color:#000;letter-spacing:-0.138px;">Re: Fw: WG: Re: Meeting on Jan....</span>
<span class="t  k" style="left:775.50px;top:386px;font-size:11.5px;line-height:16px;color:#000;letter-spacing:-0.005px;">CN=Denis Hofmann/O=Alcan@A...</span>
<span class="t  k" style="left:963.40px;top:386px;font-size:11.5px;line-height:16px;color:#000;letter-spacing:-0.258px;">07-Jan-05 9:15:13 AM</span>
<span class="t  k" style="left:1151.00px;top:386px;font-size:11.5px;line-height:16px;color:#000;letter-spacing:-0.258px;">07-Jan-05 9:15:13 AM</span>
<span class="t  k" style="left:1338.50px;top:386px;font-size:11.5px;line-height:16px;color:#000;">3</span>
<div class="b" style="left:339px;top:425.79999999999995px;width:1184px;height:1.3px;background:#cbdef9;"></div>
<svg style="left:342px;top:409.30px" width="13" height="13" viewBox="0 0 13 13"><use href="#cb"/></svg>
<svg style="left:362px;top:408.00px" width="13" height="12" viewBox="0 0 13 12"><use href="#env"/></svg>
<svg style="left:384px;top:409.30px" width="9" height="13" viewBox="0 0 9 13"><use href="#clip"/></svg>
<span class="t  k" style="left:402.50px;top:408px;font-size:11.5px;line-height:16px;color:#000;letter-spacing:-0.193px;">Ernst.Lutz@alcan.com</span>
<span class="t  k" style="left:589.20px;top:408px;font-size:11.5px;line-height:16px;color:#000;letter-spacing:-0.278px;">Fw: EP Overhead Costs</span>
<span class="t  k" style="left:775.50px;top:408px;font-size:11.5px;line-height:16px;color:#000;letter-spacing:0.005px;">CN=Daniela vonOw/O=Alcan@A...</span>
<span class="t  k" style="left:963.40px;top:408px;font-size:11.5px;line-height:16px;color:#000;letter-spacing:-0.258px;">07-Jan-05 9:18:22 AM</span>
<span class="t  k" style="left:1151.00px;top:408px;font-size:11.5px;line-height:16px;color:#000;letter-spacing:-0.258px;">07-Jan-05 9:18:22 AM</span>
<span class="t  k" style="left:1338.50px;top:408px;font-size:11.5px;line-height:16px;color:#000;">14</span>
<div class="b" style="left:339px;top:427.5px;width:1199px;height:3.5px;background:#cfe0fb;"></div>
<div class="b" style="left:339px;top:431px;width:1199px;height:360px;background:#f0f0f0;"></div>
<div class="b" style="left:339px;top:431px;width:1199px;height:2.5px;background:#f6f9fe;"></div>
<div class="b" style="left:341.0px;top:435.7px;width:103.10000000000002px;height:31.8px;background:#f0f0f0;border:1px solid #b2b2b2;border-bottom:none;border-radius:5px 5px 0 0;"></div>
<span class="t " style="left:348.50px;top:444px;font-size:11.5px;line-height:16px;color:#2a2a3a;letter-spacing:0.015px;">Normal Mail View</span>
<div class="b" style="left:443.1px;top:435.7px;width:60.39999999999998px;height:31.8px;background:#f0f0f0;border:1px solid #b2b2b2;border-bottom:none;border-radius:5px 5px 0 0;"></div>
<span class="t " style="left:449.40px;top:444px;font-size:11.5px;line-height:16px;color:#2a2a3a;letter-spacing:-0.321px;">Hex View</span>
<div class="b" style="left:502.5px;top:435.7px;width:93.70000000000005px;height:31.8px;background:#f0f0f0;border:1px solid #b2b2b2;border-bottom:none;border-radius:5px 5px 0 0;"></div>
<span class="t " style="left:509.70px;top:444px;font-size:11.5px;line-height:16px;color:#2a2a3a;letter-spacing:-0.082px;">Properties View</span>
<div class="b" style="left:595.2px;top:435.7px;width:126.79999999999995px;height:31.8px;background:#f0f0f0;border:1px solid #b2b2b2;border-bottom:none;border-radius:5px 5px 0 0;"></div>
<span class="t " style="left:602.00px;top:444px;font-size:11.5px;line-height:16px;color:#2a2a3a;letter-spacing:-0.131px;">Message Header View</span>
<div class="b" style="left:721.0px;top:435.7px;width:70.0px;height:31.8px;background:#f0f0f0;border:1px solid #b2b2b2;border-bottom:none;border-radius:5px 5px 0 0;"></div>
<span class="t " style="left:727.50px;top:444px;font-size:11.5px;line-height:16px;color:#2a2a3a;letter-spacing:-0.160px;">MIME View</span>
<div class="b" style="left:790.0px;top:435.7px;width:93.5px;height:31.8px;background:#f0f0f0;border:1px solid #b2b2b2;border-bottom:none;border-radius:5px 5px 0 0;"></div>
<span class="t " style="left:796.50px;top:444px;font-size:11.5px;line-height:16px;color:#2a2a3a;letter-spacing:-0.033px;">Email Hop View</span>
<div class="b" style="left:882.5px;top:435.7px;width:70px;height:31.8px;background:#f0f0f0;border:1px solid #b2b2b2;border-bottom:none;border-radius:5px 5px 0 0;"></div>
<span class="t " style="left:889.00px;top:444px;font-size:11.5px;line-height:16px;color:#2a2a3a;letter-spacing:-0.255px;">HTML View</span>
<div class="b" style="left:951.5px;top:435.7px;width:60px;height:31.8px;background:#f0f0f0;border:1px solid #b2b2b2;border-bottom:none;border-radius:5px 5px 0 0;"></div>
<span class="t " style="left:958.50px;top:444px;font-size:11.5px;line-height:16px;color:#2a2a3a;letter-spacing:-0.508px;">RTF View</span>
<div class="b" style="left:1010.5px;top:435.7px;width:78px;height:31.8px;background:#f0f0f0;border:1px solid #b2b2b2;border-bottom:none;border-radius:5px 5px 0 0;"></div>
<span class="t " style="left:1017.50px;top:444px;font-size:11.5px;line-height:16px;color:#2a2a3a;letter-spacing:-0.038px;">Attachments</span>
<div class="b" style="left:443.6px;top:467px;width:1094.4px;height:1px;background:#b2b2b2;"></div>
<div class="b" style="left:343px;top:468px;width:1193px;height:195px;background:#bfdbff;border:1px solid #7aa6e0;"></div>
<span class="t " style="left:346.80px;top:468px;font-size:11.5px;line-height:16px;font-weight:bold;color:#000;letter-spacing:0.170px;-webkit-text-stroke:0.2px #000;">Path</span>
<span class="t  k" style="left:446.30px;top:468px;font-size:11px;line-height:16px;color:#000;">:</span>
<span class="t " style="left:346.80px;top:491px;font-size:11.5px;line-height:16px;font-weight:bold;color:#000;letter-spacing:0.112px;-webkit-text-stroke:0.2px #000;">From</span>
<span class="t  k" style="left:446.30px;top:491px;font-size:11px;line-height:16px;color:#000;">:</span>
<span class="t " style="left:346.80px;top:513px;font-size:11.5px;line-height:16px;font-weight:bold;color:#000;letter-spacing:0.252px;-webkit-text-stroke:0.2px #000;">To</span>
<span class="t  k" style="left:446.30px;top:513px;font-size:11px;line-height:16px;color:#000;">:</span>
<span class="t " style="left:346.80px;top:535px;font-size:11.5px;line-height:16px;font-weight:bold;color:#000;letter-spacing:-0.750px;-webkit-text-stroke:0.2px #000;">Cc</span>
<span class="t  k" style="left:446.30px;top:535px;font-size:11px;line-height:16px;color:#000;">:</span>
<span class="t " style="left:346.80px;top:557px;font-size:11.5px;line-height:16px;font-weight:bold;color:#000;letter-spacing:-0.132px;-webkit-text-stroke:0.2px #000;">Bcc</span>
<span class="t  k" style="left:446.30px;top:557px;font-size:11px;line-height:16px;color:#000;">:</span>
<span class="t " style="left:346.80px;top:579px;font-size:11.5px;line-height:16px;font-weight:bold;color:#000;letter-spacing:0.238px;-webkit-text-stroke:0.2px #000;">Subject</span>
<span class="t  k" style="left:446.30px;top:579px;font-size:11px;line-height:16px;color:#000;">:</span>
<span class="t " style="left:346.80px;top:601px;font-size:11.5px;line-height:16px;font-weight:bold;color:#000;letter-spacing:0.568px;-webkit-text-stroke:0.2px #000;">Attachment(s)</span>
<span class="t  k" style="left:446.30px;top:601px;font-size:11px;line-height:16px;color:#000;">:</span>
<span class="t " style="left:454.60px;top:468px;font-size:11px;line-height:16px;color:#1a1a3a;letter-spacing:-0.101px;text-decoration:underline;">D:\Nilesh\``Sample Data Files\Server MBOX Files\mbox\Sent.mbox</span>
<span class="t  k" style="left:454.60px;top:491px;font-size:11px;line-height:16px;color:#000;letter-spacing:0.054px;">Ernst.Lutz@alcan.com</span>
<span class="t  k" style="left:454.60px;top:513px;font-size:11px;line-height:16px;color:#000;letter-spacing:0.189px;">CN=Marianne Bernath/O=Alcan@ALCAN</span>
<span class="t  k" style="left:454.60px;top:579px;font-size:11px;line-height:16px;color:#000;letter-spacing:0.172px;">Fw: Antwort: Pensum Frau Leclercq</span>
<span class="t " style="left:1126.60px;top:468px;font-size:11.5px;line-height:16px;font-weight:bold;color:#000;letter-spacing:0.327px;-webkit-text-stroke:0.2px #000;">Date Time</span>
<span class="t  k" style="left:1192.60px;top:468px;font-size:11px;line-height:16px;color:#000;">:</span>
<span class="t  k" style="left:1202.20px;top:468px;font-size:11px;line-height:16px;color:#000;letter-spacing:-0.012px;">04-Jan-05 6:28:41 AM</span>
<div class="b" style="left:343px;top:663px;width:1193px;height:125px;background:#fff;border:1px solid #7aa6e0;border-top:none;"></div>
<div class="b" style="left:1517.8px;top:663.2px;width:17px;height:123.5px;background:#f0f0f0;"></div>
<div class="b" style="left:1519px;top:697.5px;width:14.8px;height:14.6px;background:#cdcdcd;"></div>
<svg style="left:1518px;top:663px" width="17" height="124" viewBox="0 0 17 124"><path d="M3.6 25.4L8.5 18.6 13.4 25.4M3.6 98.6L8.5 105.4 13.4 98.6" fill="none" stroke="#5c5c5c" stroke-width="2.4" stroke-linejoin="miter"/></svg>
<div class="b" style="left:341px;top:467.5px;width:1px;height:323px;background:#b4b4b4;"></div>
<div class="b" style="left:341px;top:789.7px;width:1197px;height:1.3px;background:#b4b4b4;"></div>
<div class="b" style="left:339px;top:791px;width:1199px;height:1px;background:#e4ecf8;"></div>
<span class="t " style="left:354.20px;top:679px;font-size:13.4px;line-height:19px;color:#1a1a1a;font-family:'Liberation Mono',monospace;">Hoi Marianne</span>
<span class="t " style="left:354.20px;top:711px;font-size:13.4px;line-height:19px;color:#1a1a1a;font-family:'Liberation Mono',monospace;">da wollen wir mal sehen was er da so macht :-)</span>
<span class="t " style="left:354.20px;top:743px;font-size:13.4px;line-height:19px;color:#1a1a1a;font-family:'Liberation Mono',monospace;">Ich wuensche Dir einen frohen Jahresanfang und freue mich, auch weiter mit Dir</span>
<span class="t " style="left:354.20px;top:759px;font-size:13.4px;line-height:19px;color:#1a1a1a;font-family:'Liberation Mono',monospace;">zu tun zu habe. Das ist immer aufheiternd und nett.</span>
<div class="b" style="left:946.5px;top:71.5px;width:130.8px;height:46.3px;background:rgba(40,55,75,.55);border-radius:2px;filter:blur(.6px);"></div>
<div class="b" style="left:942.9px;top:46px;width:99.6px;height:22.5px;background:#f6f6f6;border:1px solid #a8acb4;border-bottom:none;"></div>
<div class="b" style="left:942.9px;top:68px;width:131.3px;height:47.3px;background:#fbfbfb;border:1px solid #9a9ea6;"></div>
<div class="b" style="left:943.9px;top:68px;width:97.6px;height:1px;background:#f6f6f6;"></div>
<div class="b" style="left:943.9px;top:69px;width:26px;height:45.3px;background:#e9edee;border-right:1px solid #d0d4d8;"></div>
<svg style="left:945px;top:51px" width="16" height="14" viewBox="0 0 16 14"><rect x="5.5" y=".5" width="10" height="8" fill="#fff" stroke="#4a4a5a" stroke-width=".9"/><path d="M5.5 3H15.5M5.5 5.6H15.5M8.8 .5V8.5M12.2 .5V8.5" stroke="#4a4a5a" stroke-width=".7"/><rect x=".5" y="4.5" width="9" height="9" fill="#e8f4f0" stroke="#3a6a6a" stroke-width=".9"/><path d="M.5 7.4H9.5M.5 10.4H9.5M3.5 4.5V13.5M6.5 4.5V13.5" stroke="#3a7a7a" stroke-width=".7"/></svg>
<span class="t " style="left:964.70px;top:50px;font-size:11.5px;line-height:16px;color:#1f4a98;letter-spacing:0.101px;">Switch View</span>
<svg style="left:1033px;top:56.5px" width="6" height="4" viewBox="0 0 6 4"><path d="M.2 .4H5.8L3 3.4Z" fill="#3a4a6a"/></svg>
<svg style="left:948.5px;top:72.5px" width="16" height="16" viewBox="0 0 16 16"><defs><linearGradient id="gHz" x1="0" y1="0" x2="0" y2="1"><stop offset="0" stop-color="#1565ac"/><stop offset="1" stop-color="#3f9ad6"/></linearGradient></defs><rect x=".5" y=".5" width="15" height="14.5" fill="#fff" stroke="#2f86c8" stroke-width="1"/><rect x=".5" y=".5" width="15" height="3.6" fill="url(#gHz)"/><rect x=".5" y="7.6" width="15" height="3.4" fill="url(#gHz)"/></svg>
<span class="t " style="left:980.00px;top:73px;font-size:11.5px;line-height:16px;color:#1f4a98;letter-spacing:0.343px;">Horizontal</span>
<svg style="left:948px;top:96px" width="16" height="13" viewBox="0 0 16 13"><rect x=".6" y=".6" width="14.8" height="11.6" rx="1" fill="#fff" stroke="#3f6fc0" stroke-width="1.2"/><path d="M.6 1.4H15.4" stroke="#3f6fc0" stroke-width="1.6"/><path d="M8 1V12" stroke="#3f6fc0" stroke-width="1.3"/></svg>
<span class="t " style="left:980.00px;top:95px;font-size:11.5px;line-height:16px;color:#1f4a98;letter-spacing:0.036px;">Vertical</span>
<div class="b" style="left:938.6px;top:36.2px;width:143.8px;height:86.7px;border:4px solid #ed1c24;"></div>
</body></html>
